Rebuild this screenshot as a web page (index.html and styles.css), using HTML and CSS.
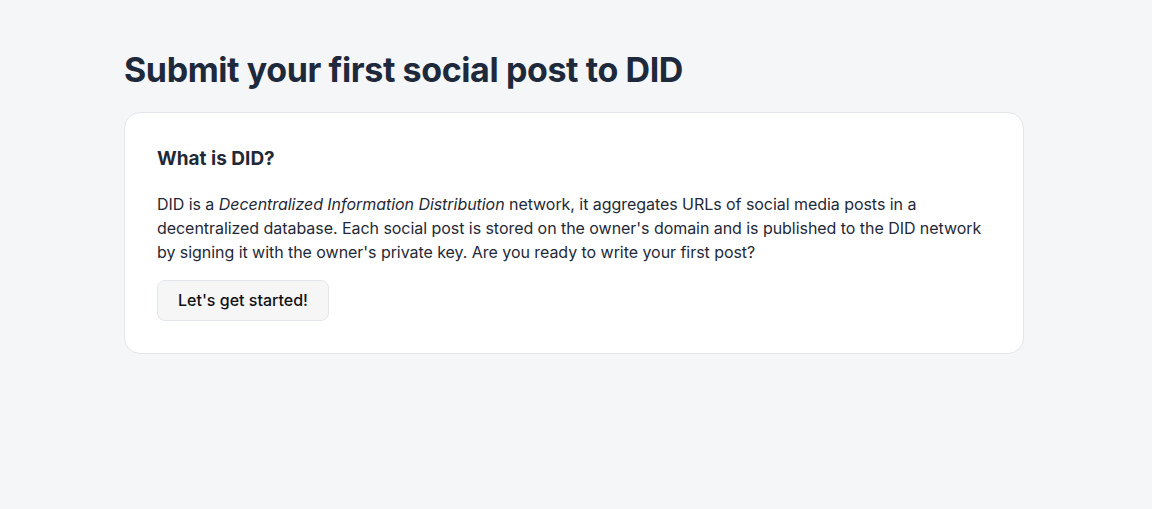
FILE: index.html
```html
<!DOCTYPE html>
<html lang="en">
<head>
<meta charset="utf-8">
<title>Submit your first social post to DID</title>
<link rel="stylesheet" href="styles.css">
</head>
<body>
<main class="page">
  <h1 class="title">Submit your first social post to DID</h1>
  <section class="card">
    <h2 class="card-title">What is DID?</h2>
    <p class="card-text">DID is a <em>Decentralized Information Distribution</em> network, it aggregates URLs of social media posts in a decentralized database. Each social post is stored on the owner's domain and is published to the DID network by signing it with the owner's private key. Are you ready to write your first post?</p>
    <button class="btn" type="button">Let's get started!</button>
  </section>
</main>
</body>
</html>
```

FILE: styles.css
```css
html, body {
  margin: 0;
  padding: 0;
}
body {
  background: #f5f6f8;
  font-family: Inter, "Noto Sans", "Liberation Sans", sans-serif;
  color: #1f2937;
}
.page {
  width: 900px;
  margin-left: 124px;
  padding-top: 50px;
}
.title {
  margin: 0 0 22px;
  font-size: 34px;
  line-height: 40px;
  font-weight: 700;
  color: #1e293b;
  letter-spacing: -0.4px;
}
.card {
  background: #ffffff;
  border: 1px solid #e2e6ea;
  border-radius: 16px;
  padding: 32px;
}
.card-title {
  margin: 0 0 19px;
  font-size: 19px;
  line-height: 28px;
  font-weight: 700;
  color: #1f2937;
}
.card-text {
  margin: 0 0 16px;
  font-size: 16px;
  line-height: 24px;
  color: #1f2937;
  letter-spacing: -0.05px;
}
.btn {
  font-family: inherit;
  font-size: 16px;
  line-height: 23px;
  font-weight: 500;
  color: #111111;
  background: #f6f6f7;
  border: 1px solid #e2e6ea;
  border-radius: 8px;
  padding: 8px 20px;
  cursor: pointer;
}
```
